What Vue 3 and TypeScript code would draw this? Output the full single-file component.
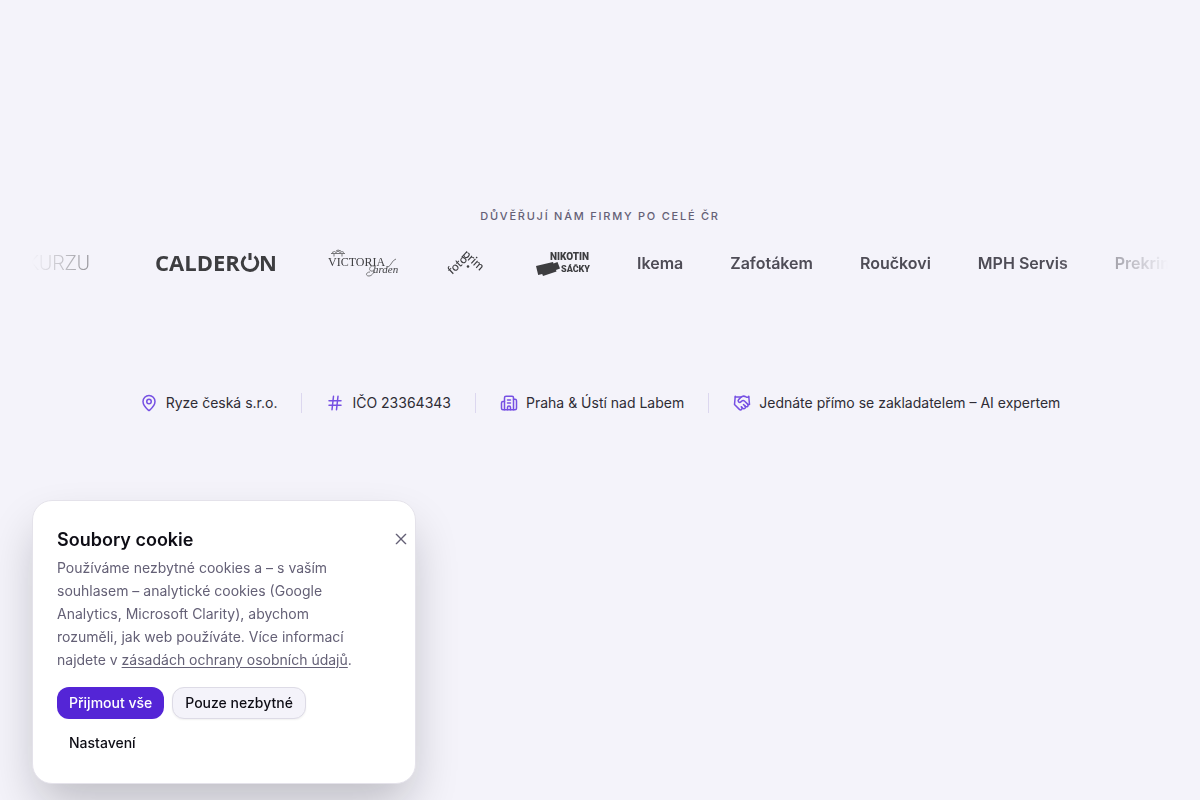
<script setup lang="ts">
interface Fact {
  label: string
  paths: string[]
}

const companies: string[] = ['Ikema', 'Zafotákem', 'Roučkovi', 'MPH Servis', 'Prekrim']

const facts: Fact[] = [
  {
    label: 'Ryze česká s.r.o.',
    paths: [
      'M20 10c0 4.993-5.539 10.193-7.399 11.799a1 1 0 0 1-1.202 0C9.539 20.193 4 14.993 4 10a8 8 0 0 1 16 0',
      'M12 7a3 3 0 1 0 0 6a3 3 0 1 0 0-6',
    ],
  },
  { label: 'IČO 23364343', paths: ['M4 9h16', 'M4 15h16', 'M10 3L8 21', 'M16 3l-2 18'] },
  {
    label: 'Praha & Ústí nad Labem',
    paths: [
      'M10 12h4',
      'M10 8h4',
      'M14 21v-3a2 2 0 0 0-4 0v3',
      'M6 10H4a2 2 0 0 0-2 2v7a2 2 0 0 0 2 2h16a2 2 0 0 0 2-2V9a2 2 0 0 0-2-2h-2',
      'M6 21V5a2 2 0 0 1 2-2h8a2 2 0 0 1 2 2v16',
    ],
  },
  {
    label: 'Jednáte přímo se zakladatelem – AI expertem',
    paths: [
      'm11 17 2 2a1 1 0 1 0 3-3',
      'm14 14 2.5 2.5a1 1 0 1 0 3-3l-3.88-3.88a3 3 0 0 0-4.24 0l-.88.88a1 1 0 1 1-3-3l2.81-2.81a5.79 5.79 0 0 1 7.06-.87l.47.28a2 2 0 0 0 1.42.25L21 4',
      'm21 3 1 11h-2',
      'M3 3 2 14l6.5 6.5a1 1 0 1 0 3-3',
      'M3 4h8',
    ],
  },
]
</script>

<template>
  <main class="page">
    <section class="trust">
      <h2 class="eyebrow">Důvěřují nám firmy po celé ČR</h2>
      <div class="marquee">
        <svg class="logo logo-kurzu" viewBox="0 0 58 32" role="img" aria-label="KURZU">
          <text x="58" y="23" text-anchor="end" class="kurzu">KURZU</text>
        </svg>
        <svg class="logo logo-calderon" viewBox="0 0 142 32" role="img" aria-label="Calderon">
          <text x="17" y="24" class="calderon">CALDER</text>
          <path d="M116.500 9.600a7.700 7.700 0 1 1-9 0M112 6v7" class="power" />
          <text x="121" y="24" class="calderon">N</text>
        </svg>
        <svg class="logo logo-victoria" viewBox="0 0 72 32" role="img" aria-label="Victoria Garden">
          <path d="M4 5.500q3-2 4 0q2-3 4 0q2-2 4 0M3 6.500h14M6 7v2.500M14 7v2.500M8 4l2-1 3 1" class="crest" />
          <text x="0" y="19" class="victoria">VICTORIA</text>
          <text x="45" y="26" class="garden">arden</text>
          <path d="M46 19c-4-1-6 4-3 5s4-3 4-5c0 6-3 10-6 10-4 0-3-4 1-4M60 20c3-1 4-7 8-8" class="flourish" />
        </svg>
        <svg class="logo logo-foto" viewBox="0 0 40 32" role="img" aria-label="fotoprim">
          <text transform="translate(4 28) rotate(-43)" class="foto">foto</text>
          <text transform="translate(14 8) rotate(42)" class="foto">prim</text>
          <circle cx="20" cy="19.500" r="1.300" />
        </svg>
        <svg class="logo logo-nikotin" viewBox="0 0 53 32" role="img" aria-label="Nikotin sáčky">
          <text x="14" y="13" class="nikotin">NIKOTIN</text>
          <text x="25" y="25" class="sacky">SÁČKY</text>
          <path d="m0 19 17-4 .5 1.500 4-1.500 2.500 6.500-4 1.500.5 1.500L7 29l-.8-2-4 1z" />
        </svg>
        <ul class="companies">
          <li v-for="name in companies" :key="name">{{ name }}</li>
        </ul>
      </div>
    </section>

    <ul class="facts">
      <li v-for="fact in facts" :key="fact.label" class="fact">
        <svg class="fact-icon" viewBox="0 0 24 24" aria-hidden="true">
          <path v-for="d in fact.paths" :key="d" :d="d" />
        </svg>
        <span>{{ fact.label }}</span>
      </li>
    </ul>

    <aside class="cookie" role="dialog" aria-labelledby="cookie-title">
      <button class="close" type="button" aria-label="Zavřít">
        <svg viewBox="0 0 24 24" aria-hidden="true"><path d="M19 5 5 19M5 5l14 14" /></svg>
      </button>
      <h2 id="cookie-title" class="cookie-title">Soubory cookie</h2>
      <p class="cookie-text">
        Používáme nezbytné cookies a – s vaším souhlasem – analytické cookies (Google Analytics,
        Microsoft Clarity), abychom rozuměli, jak web používáte. Více informací najdete v
        <a href="#zasady">zásadách ochrany osobních údajů</a>.
      </p>
      <div class="actions">
        <button class="btn primary" type="button">Přijmout vše</button>
        <button class="btn outline" type="button">Pouze nezbytné</button>
        <button class="btn ghost" type="button">Nastavení</button>
      </div>
    </aside>
  </main>
</template>

<style>
body {
  margin: 0;
  background: #f4f3fa;
}
</style>

<style scoped>
.page {
  box-sizing: border-box;
  min-height: 100vh;
  padding: 208px 32px 0;
  font-family: Inter, "Noto Sans", sans-serif;
  font-size: 14px;
  color: #0e0d15;
}
.eyebrow {
  margin: 0;
  text-align: center;
  font-size: 11px;
  line-height: 16px;
  font-weight: 500;
  letter-spacing: 0.16em;
  text-transform: uppercase;
  color: #646076;
}
.marquee {
  display: flex;
  align-items: center;
  gap: 48px;
  height: 48px;
  margin-top: 15px;
  overflow: hidden;
  mask-image: linear-gradient(to right, transparent, #000 10%, #000 90%, transparent);
}
.logo {
  flex: none;
  height: 32px;
  fill: #3d3d40;
  overflow: visible;
}
.logo-kurzu { width: 58px; }
.logo-calderon { width: 142px; }
.logo-victoria { width: 72px; }
.logo-foto { width: 40px; }
.logo-nikotin { width: 53px; }
.kurzu { font: 300 20px Roboto, sans-serif; }
.calderon { font: 700 22px "Open Sans", sans-serif; }
.power { fill: none; stroke: #3d3d40; stroke-width: 3; }
.victoria { font: 12px "Liberation Serif", serif; }
.garden { font: italic 11px "Liberation Serif", serif; }
.crest, .flourish { fill: none; stroke: #77777a; stroke-width: 1; }
.foto { font: 500 12px Lato, sans-serif; }
.nikotin { font: 900 10px Roboto, sans-serif; }
.sacky { font: 900 9px Roboto, sans-serif; }
.companies {
  display: flex;
  flex: none;
  gap: 47px;
  margin: 0;
  padding: 0;
  list-style: none;
  font-size: 16px;
  line-height: 24px;
  font-weight: 600;
  color: #4e4c56;
}
.facts {
  display: flex;
  flex-wrap: wrap;
  justify-content: center;
  row-gap: 16px;
  margin: 106px 0 0;
  padding: 0;
  list-style: none;
}
.fact {
  display: flex;
  align-items: center;
  gap: 8px;
  height: 20px;
  padding: 0 24px;
  font-weight: 400;
  line-height: 20px;
  color: #2e2c35;
}
.fact + .fact { border-left: 1px solid #dcd7ef; }
.fact-icon {
  flex: none;
  width: 18px;
  height: 18px;
  fill: none;
  stroke: #7650e3;
  stroke-width: 2;
  stroke-linecap: round;
  stroke-linejoin: round;
}
.cookie {
  position: fixed;
  left: 32px;
  bottom: 16px;
  box-sizing: border-box;
  width: 384px;
  max-width: calc(100vw - 64px);
  padding: 25px 24px 24px;
  border: 1px solid #e4e2ea;
  border-radius: 20px;
  background: #fff;
  box-shadow: 0 24px 48px -6px rgb(14 13 21 / 24%);
}
.close {
  position: absolute;
  top: 30px;
  right: 6px;
  width: 16px;
  height: 16px;
  padding: 0;
  border: 0;
  background: none;
}
.close svg {
  display: block;
  width: 16px;
  height: 16px;
  fill: none;
  stroke: #646076;
  stroke-width: 2;
  stroke-linecap: round;
}
.cookie-title {
  margin: 0;
  font-size: 18px;
  line-height: 28px;
  font-weight: 600;
}
.cookie-text {
  margin: 2px 0 0;
  padding-right: 32px;
  line-height: 23px;
  color: #646076;
}
.cookie-text a {
  color: inherit;
  text-underline-offset: 2px;
}
.actions {
  display: flex;
  flex-wrap: wrap;
  gap: 8px;
  margin-top: 16px;
}
.btn {
  height: 32px;
  padding: 0 12px 2px;
  border: 0;
  border-radius: 12px;
  background: none;
  font: inherit;
  font-weight: 500;
  color: #0e0d15;
}
.primary {
  background: #5425d6;
  color: #fff;
}
.outline {
  border: 1px solid #dddbe6;
  background: #f4f3fa;
  box-shadow: 0 1px 2px rgb(14 13 21 / 6%);
}
</style>
